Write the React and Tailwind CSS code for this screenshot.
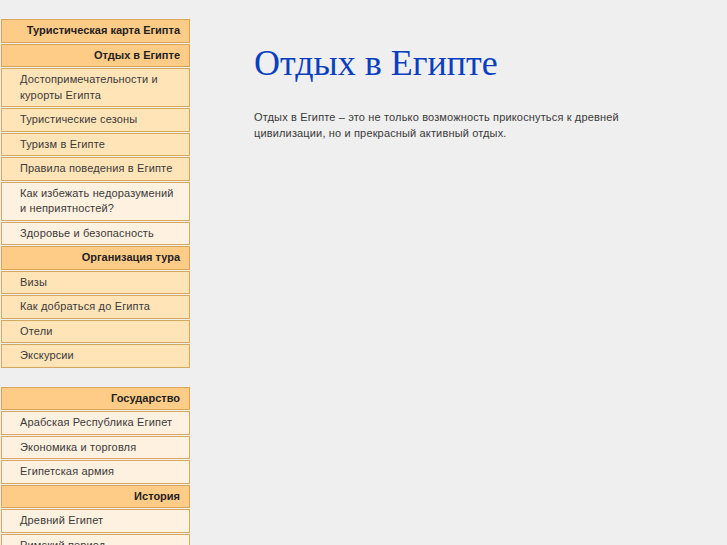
import React from "react";

const menu = [
  { title: "Туристическая карта Египта", head: true },
  { title: "Отдых в Египте", head: true },
  { title: "Достопримечательности и курорты Египта" },
  { title: "Туристические сезоны" },
  { title: "Туризм в Египте" },
  { title: "Правила поведения в Египте" },
  { title: "Как избежать недоразумений и неприятностей?", light: true },
  { title: "Здоровье и безопасность", light: true },
  { title: "Организация тура", head: true },
  { title: "Визы" },
  { title: "Как добраться до Египта" },
  { title: "Отели" },
  { title: "Экскурсии" },
];

const menu2 = [
  { title: "Государство", head: true },
  { title: "Арабская Республика Египет", light: true },
  { title: "Экономика и торговля", light: true },
  { title: "Египетская армия", light: true },
  { title: "История", head: true },
  { title: "Древний Египет", light: true },
  { title: "Римский период", light: true },
];

function MenuItem({ item }) {
  if (item.head) {
    return (
      <div className="mb-[1px] border border-[#d9a456] bg-[#ffcc88] py-[3px] pr-[9px] text-right font-bold leading-[15.5px] text-[#222]">
        {item.title}
      </div>
    );
  }
  return (
    <div
      className={`mb-[1px] border border-[#d9a85e] py-[3px] pl-[18px] pr-[10px] leading-[15.5px] tracking-[0.15px] text-[#3a3a3a] ${
        item.light ? "bg-[#fff1e0]" : "bg-[#ffe4b8]"
      }`}
    >
      {item.title}
    </div>
  );
}

export default function App() {
  return (
    <div className="min-h-[545px] bg-[#efefef] font-['Liberation_Sans',Arial,sans-serif] text-[11px]">
      <div className="flex">
        <div className="ml-[1px] mt-[19px] w-[189px] shrink-0">
          {menu.map((m, i) => (
            <MenuItem key={i} item={m} />
          ))}
          <div className="mt-[19px]">
            {menu2.map((m, i) => (
              <MenuItem key={i} item={m} />
            ))}
          </div>
        </div>
        <div className="ml-[64px] mt-[42px] w-[380px]">
          <h1 className="font-['Liberation_Serif','Times_New_Roman',serif] text-[36px] leading-[42px] text-[#0a3fbf]">
            Отдых в Египте
          </h1>
          <p className="mt-[26px] leading-[15.5px] tracking-[0.15px] text-[#3a3a3a]">
            Отдых в Египте – это не только возможность прикоснуться к древней
            цивилизации, но и прекрасный активный отдых.
          </p>
        </div>
      </div>
    </div>
  );
}
